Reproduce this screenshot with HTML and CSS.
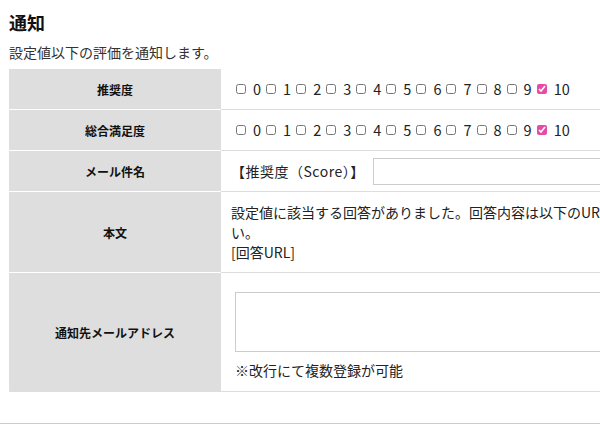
FILE: index.html
```html
<!DOCTYPE html>
<html>
<head>
    <title>通知設定</title>
    <link rel="stylesheet" href="styles.css">
</head>
<body>
    <div class="section">
        <h2 class="section-title">通知</h2>
        <p class="section-desc">設定値以下の評価を通知します。</p>

        <table class="form-table">
            <tr>
                <th>推奨度</th>
                <td>
                    <div class="score-list">
                        <label class="score"><input type="checkbox">0</label>
                        <label class="score"><input type="checkbox">1</label>
                        <label class="score"><input type="checkbox">2</label>
                        <label class="score"><input type="checkbox">3</label>
                        <label class="score"><input type="checkbox">4</label>
                        <label class="score"><input type="checkbox">5</label>
                        <label class="score"><input type="checkbox">6</label>
                        <label class="score"><input type="checkbox">7</label>
                        <label class="score"><input type="checkbox">8</label>
                        <label class="score"><input type="checkbox">9</label>
                        <label class="score"><input type="checkbox" checked>10</label>
                    </div>
                </td>
            </tr>
            <tr>
                <th>総合満足度</th>
                <td>
                    <div class="score-list">
                        <label class="score"><input type="checkbox">0</label>
                        <label class="score"><input type="checkbox">1</label>
                        <label class="score"><input type="checkbox">2</label>
                        <label class="score"><input type="checkbox">3</label>
                        <label class="score"><input type="checkbox">4</label>
                        <label class="score"><input type="checkbox">5</label>
                        <label class="score"><input type="checkbox">6</label>
                        <label class="score"><input type="checkbox">7</label>
                        <label class="score"><input type="checkbox">8</label>
                        <label class="score"><input type="checkbox">9</label>
                        <label class="score"><input type="checkbox" checked>10</label>
                    </div>
                </td>
            </tr>
            <tr>
                <th>メール件名</th>
                <td>
                    <div class="subject">
                        <span class="subject-prefix">【推奨度（Score）】</span>
                        <input type="text" class="subject-input">
                    </div>
                </td>
            </tr>
            <tr class="row-body">
                <th>本文</th>
                <td>設定値に該当する回答がありました。回答内容は以下のURLからご確認ください。<br>[回答URL]</td>
            </tr>
            <tr class="row-address">
                <th>通知先メールアドレス</th>
                <td>
                    <div class="address-box">
                        <textarea class="address-input"></textarea>
                        <p class="note">※改行にて複数登録が可能</p>
                    </div>
                </td>
            </tr>
        </table>
    </div>
    <hr class="divider">
</body>
</html>
```

FILE: styles.css
```css
html, body { overflow: hidden; }
body { margin: 0; font-family: "Noto Sans CJK JP", "Noto Sans", sans-serif; font-size: 14px; color: #333; background: #fff; }
.section { padding: 0 9px; }
.section-title { margin: 0; padding-top: 11px; font-size: 18px; line-height: 22px; font-weight: bold; color: #111; }
.section-desc { margin: 10px 0 8px; line-height: 18px; }

.form-table { width: 726px; border-collapse: separate; border-spacing: 0; }
.form-table th { width: 212px; padding: 0; background: #dedede; font-size: 12px; font-weight: bold; color: #111; text-align: center; border-bottom: 1px solid #fff; }
.form-table td { height: 40px; padding: 0 10px; border-bottom: 1px solid #ddd; line-height: 20px; vertical-align: middle; color: #222; }
.form-table tr:last-child th { border-bottom-color: #ddd; }

.score-list { display: flex; align-items: center; padding-left: 5px; }
.score { display: flex; align-items: center; margin-right: 5px; font-size: 14.5px; }
.score input { width: 10px; height: 10px; margin: 0 7px 0 0; accent-color: #e64ca6; }

.subject { display: flex; align-items: center; }
.subject-prefix { letter-spacing: 0.5px; }
.subject-input { width: 300px; height: 27px; box-sizing: border-box; margin-left: 8px; border: 1px solid #ccc; padding: 0 6px; }

.row-body td { height: 60px; padding: 10px; }

.row-address td { padding: 11px 10px; }
.address-box { padding-left: 4px; }
.address-input { display: block; width: 400px; height: 60px; box-sizing: border-box; margin: 8px 0 8px; border: 1px solid #ccc; resize: none; }
.note { margin: 0; line-height: 20px; }

.divider { margin: 31px 0 0; border: 0; border-top: 1px solid #ccc; }
```
